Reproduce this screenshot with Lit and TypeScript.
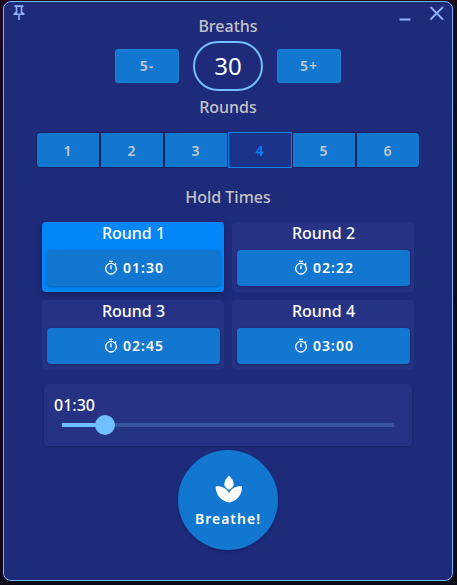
import { LitElement, html, css, svg } from "lit";
import { customElement, state } from "lit/decorators.js";
import { classMap } from "lit/directives/class-map.js";

const MAX_HOLD = 690;

const format = (s: number) =>
  `${String(Math.floor(s / 60)).padStart(2, "0")}:${String(s % 60).padStart(2, "0")}`;

const timerIcon = svg`
  <path d="M9 1h6v2H9zM11 8h2v6h-2z" />
  <path d="M19.03 7.39l1.42-1.42c-.45-.51-.9-.97-1.41-1.41L17.62 6A8.96 8.96 0 0 0 12 4a9 9 0 1 0 7.03 3.39M12 20a7 7 0 1 1 0-14 7 7 0 0 1 0 14" />`;

@customElement("app-root")
export class AppRoot extends LitElement {
  static styles = css`
    :host {
      display: flex;
      box-sizing: border-box;
      min-height: 100vh;
      padding: 1px 4px 4px 3px;
      background: linear-gradient(#1c0a1c, #120a18 30%, #0e0a16);
      font-family: "Noto Sans", "Open Sans", sans-serif;
      color: #f2f3f8;
    }
    .window {
      flex: 1;
      display: flex;
      flex-direction: column;
      box-sizing: border-box;
      border: 1px solid #6db8ff;
      border-radius: 8px;
      background: #1e2a7a;
    }
    button {
      margin: 0;
      padding: 0;
      border: 0;
      background: none;
      color: inherit;
      font: inherit;
      cursor: pointer;
    }
    svg {
      display: block;
    }
    h2,
    h3 {
      margin: 0;
      font-size: 16px;
      line-height: 24px;
      font-weight: 500;
      text-align: center;
    }
    h2 {
      color: #c4c4c8;
    }
    h3 {
      line-height: 22px;
      color: #fff;
    }
    .titlebar {
      display: grid;
      grid-template-columns: 1fr auto 1fr;
      align-items: start;
    }
    .titlebar h2 {
      padding-top: 12px;
    }
    .tools {
      display: flex;
      color: #8fb4ff;
      padding: 2px 6px;
    }
    .tools.end {
      justify-content: flex-end;
      gap: 14px;
    }
    main {
      display: flex;
      flex-direction: column;
      padding: 3px 32px 16px;
    }
    .breaths {
      display: flex;
      justify-content: center;
      align-items: center;
      gap: 14px;
      margin-bottom: 4px;
    }
    .btn {
      border-radius: 4px;
      background: #1177d1;
      font-size: 14px;
      line-height: 20px;
      font-weight: 600;
      letter-spacing: 1px;
      box-shadow: 0 1px 3px rgba(0, 0, 30, 0.3);
    }
    .step {
      width: 64px;
      height: 34px;
      color: #c4c8ce;
      box-shadow: inset 0 0 0 1px #1c7fd6;
    }
    .count {
      box-sizing: border-box;
      width: 70px;
      height: 50px;
      border: 2px solid #70c0ff;
      border-radius: 25px;
      font-size: 24px;
      line-height: 46px;
      text-align: center;
      color: #fff;
    }
    .rounds {
      display: grid;
      grid-template-columns: repeat(6, 1fr);
      margin: 13px 0 17px;
    }
    .round {
      height: 36px;
      border: 1px solid #17205f;
      background: #1177d1;
      color: #c4c8ce;
      font-size: 14px;
      font-weight: 600;
      letter-spacing: 1px;
    }
    .round:first-child {
      border-radius: 4px 0 0 4px;
    }
    .round:last-child {
      border-radius: 0 4px 4px 0;
    }
    .round.on {
      border-color: #0286f8;
      background: #1b3389;
      color: #0286f8;
    }
    .cards {
      display: grid;
      grid-template-columns: 1fr 1fr;
      gap: 8px;
      margin: 13px 6px 14px;
    }
    .card {
      display: flex;
      flex-direction: column;
      gap: 6px;
      padding: 0 4px 6px 5px;
      border-radius: 4px;
      background: #263283;
    }
    .card.on {
      background: #0286f8;
      box-shadow: 0 3px 6px rgba(0, 0, 30, 0.3);
    }
    .time {
      display: flex;
      align-items: center;
      justify-content: center;
      gap: 4px;
      height: 36px;
      color: #fff;
    }
    .slider {
      display: flex;
      flex-direction: column;
      margin: 0 8px 4px;
      padding: 9px 8px 11px;
      border-radius: 4px;
      background: #263283;
      box-shadow: 0 1px 2px rgba(0, 0, 30, 0.2);
    }
    .slider label {
      padding: 2px 2px 0;
      font-size: 16px;
      line-height: 20px;
      font-weight: 500;
      color: #fff;
    }
    .slider input {
      appearance: none;
      width: 100%;
      height: 20px;
      margin: 0;
      background:
        linear-gradient(#70c0ff, #70c0ff) 10px center / calc((100% - 20px) * var(--fill)) 4px no-repeat,
        linear-gradient(#3a559f, #3a559f) center / calc(100% - 20px) 4px no-repeat;
    }
    .slider input::-webkit-slider-thumb {
      appearance: none;
      width: 20px;
      height: 20px;
      border-radius: 50%;
      background: #70c0ff;
    }
    .breathe {
      display: flex;
      flex-direction: column;
      align-items: center;
      justify-content: center;
      gap: 6px;
      align-self: center;
      width: 100px;
      height: 100px;
      padding-top: 4px;
      border-radius: 50%;
      color: #fff;
    }
  `;

  @state() private breaths = 30;
  @state() private rounds = 4;
  @state() private active = 0;
  @state() private holds = [90, 142, 165, 180, 180, 180];

  private setHold(e: Event) {
    const value = Number((e.target as HTMLInputElement).value);
    this.holds = this.holds.map((h, i) => (i === this.active ? value : h));
  }

  private setRounds(n: number) {
    this.rounds = n;
    this.active = Math.min(this.active, n - 1);
  }

  render() {
    const hold = this.holds[this.active];
    return html`
      <div class="window">
        <header class="titlebar">
          <div class="tools">
            <button aria-label="Pin window">
              <svg width="18" height="18" viewBox="0 0 18 18" fill="none" stroke="currentColor" stroke-width="1.6">
                <path d="M4.500 2.100h9M6.500 2v6.500L4 10M11.500 2v6.500L14 10M3.500 10.300h11M9 10v6" />
              </svg>
            </button>
          </div>
          <h2>Breaths</h2>
          <div class="tools end">
            <button aria-label="Minimize">
              <svg width="18" height="18" viewBox="0 0 18 18" fill="none" stroke="currentColor" stroke-width="2">
                <path d="M3.500 15.500h11" />
              </svg>
            </button>
            <button aria-label="Close">
              <svg width="18" height="18" viewBox="0 0 18 18" fill="none" stroke="currentColor" stroke-width="1.8">
                <path d="M2.500 3L15 15.500M15 3L2.500 15.500" />
              </svg>
            </button>
          </div>
        </header>
        <main>
          <div class="breaths">
            <button class="btn step" @click=${() => (this.breaths = Math.max(5, this.breaths - 5))}>5-</button>
            <div class="count">${this.breaths}</div>
            <button class="btn step" @click=${() => (this.breaths += 5)}>5+</button>
          </div>
          <h2>Rounds</h2>
          <div class="rounds">
            ${[1, 2, 3, 4, 5, 6].map(
              (n) => html`<button
                class=${classMap({ round: true, on: n === this.rounds })}
                aria-pressed=${n === this.rounds}
                @click=${() => this.setRounds(n)}
              >${n}</button>`
            )}
          </div>
          <h2>Hold Times</h2>
          <div class="cards">
            ${this.holds.slice(0, this.rounds).map(
              (h, i) => html`<section class=${classMap({ card: true, on: i === this.active })}>
                <h3>Round ${i + 1}</h3>
                <button class="btn time" @click=${() => (this.active = i)}>
                  <svg width="16" height="16" viewBox="0 0 24 24" fill="currentColor" aria-hidden="true">${timerIcon}</svg>
                  ${format(h)}
                </button>
              </section>`
            )}
          </div>
          <div class="slider">
            <label for="hold">${format(hold)}</label>
            <input
              id="hold"
              type="range"
              min="0"
              max=${MAX_HOLD}
              .value=${String(hold)}
              style="--fill: ${hold / MAX_HOLD}"
              @input=${this.setHold}
            />
          </div>
          <button class="btn breathe">
            <svg width="28" height="28" viewBox="0 0 28 28" fill="currentColor" aria-hidden="true">
              <path d="M15 .5C17.500 3 19.700 6 19.700 9.200C19.700 11.500 17.500 13.400 15 14.800C12.500 13.400 10.300 11.500 10.300 9.200C10.300 6 12.500 3 15 .5Z" />
              <path d="M1.600 11.500C7 10.800 12.500 12.800 15 18.300C17.500 12.800 23 10.800 28 11.500C28.200 19.500 23.200 26 15 27.400C6.800 26 1.600 19.500 1.600 11.500Z" />
            </svg>
            Breathe!
          </button>
        </main>
      </div>
    `;
  }
}
